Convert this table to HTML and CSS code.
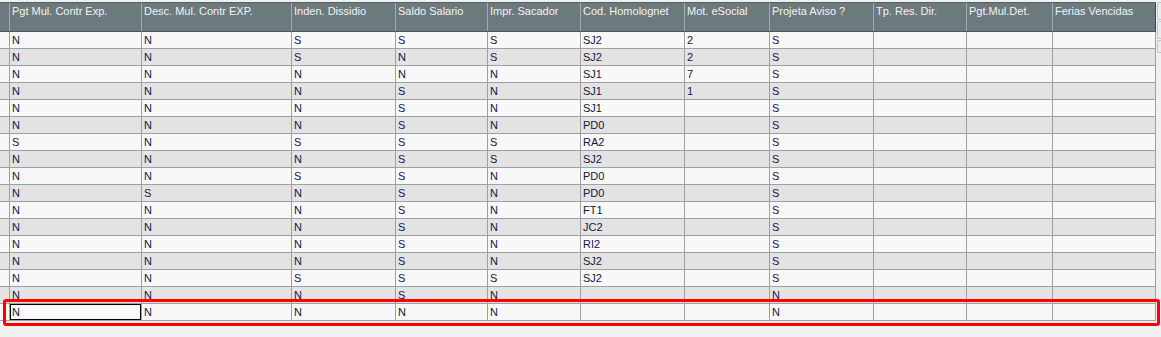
FILE: index.html
```html
<!DOCTYPE html>
<html lang="pt">
<head>
<meta charset="utf-8">
<title>Grade</title>
<link rel="stylesheet" href="styles.css">
</head>
<body>
<div class="frame">
  <div class="grid">
    <div class="row head">
      <div class="c"></div>
      <div class="c">Pgt Mul. Contr Exp.</div>
      <div class="c">Desc. Mul. Contr EXP.</div>
      <div class="c">Inden. Dissidio</div>
      <div class="c">Saldo Salario</div>
      <div class="c">Impr. Sacador</div>
      <div class="c">Cod. Homolognet</div>
      <div class="c">Mot. eSocial</div>
      <div class="c">Projeta Aviso ?</div>
      <div class="c">Tp. Res. Dir.</div>
      <div class="c">Pgt.Mul.Det.</div>
      <div class="c">Ferias Vencidas</div>
    </div>
    <div class="row odd"><div class="c"></div><div class="c">N</div><div class="c">N</div><div class="c">S</div><div class="c">S</div><div class="c">S</div><div class="c">SJ2</div><div class="c">2</div><div class="c">S</div><div class="c"></div><div class="c"></div><div class="c"></div></div>
    <div class="row even"><div class="c"></div><div class="c">N</div><div class="c">N</div><div class="c">S</div><div class="c">N</div><div class="c">S</div><div class="c">SJ2</div><div class="c">2</div><div class="c">S</div><div class="c"></div><div class="c"></div><div class="c"></div></div>
    <div class="row odd"><div class="c"></div><div class="c">N</div><div class="c">N</div><div class="c">N</div><div class="c">N</div><div class="c">N</div><div class="c">SJ1</div><div class="c">7</div><div class="c">S</div><div class="c"></div><div class="c"></div><div class="c"></div></div>
    <div class="row even"><div class="c"></div><div class="c">N</div><div class="c">N</div><div class="c">N</div><div class="c">S</div><div class="c">N</div><div class="c">SJ1</div><div class="c">1</div><div class="c">S</div><div class="c"></div><div class="c"></div><div class="c"></div></div>
    <div class="row odd"><div class="c"></div><div class="c">N</div><div class="c">N</div><div class="c">N</div><div class="c">S</div><div class="c">N</div><div class="c">SJ1</div><div class="c"></div><div class="c">S</div><div class="c"></div><div class="c"></div><div class="c"></div></div>
    <div class="row even"><div class="c"></div><div class="c">N</div><div class="c">N</div><div class="c">N</div><div class="c">S</div><div class="c">N</div><div class="c">PD0</div><div class="c"></div><div class="c">S</div><div class="c"></div><div class="c"></div><div class="c"></div></div>
    <div class="row odd"><div class="c"></div><div class="c">S</div><div class="c">N</div><div class="c">S</div><div class="c">S</div><div class="c">S</div><div class="c">RA2</div><div class="c"></div><div class="c">S</div><div class="c"></div><div class="c"></div><div class="c"></div></div>
    <div class="row even"><div class="c"></div><div class="c">N</div><div class="c">N</div><div class="c">N</div><div class="c">S</div><div class="c">S</div><div class="c">SJ2</div><div class="c"></div><div class="c">S</div><div class="c"></div><div class="c"></div><div class="c"></div></div>
    <div class="row odd"><div class="c"></div><div class="c">N</div><div class="c">N</div><div class="c">S</div><div class="c">S</div><div class="c">N</div><div class="c">PD0</div><div class="c"></div><div class="c">S</div><div class="c"></div><div class="c"></div><div class="c"></div></div>
    <div class="row even"><div class="c"></div><div class="c">N</div><div class="c">S</div><div class="c">N</div><div class="c">S</div><div class="c">N</div><div class="c">PD0</div><div class="c"></div><div class="c">S</div><div class="c"></div><div class="c"></div><div class="c"></div></div>
    <div class="row odd"><div class="c"></div><div class="c">N</div><div class="c">N</div><div class="c">N</div><div class="c">S</div><div class="c">N</div><div class="c">FT1</div><div class="c"></div><div class="c">S</div><div class="c"></div><div class="c"></div><div class="c"></div></div>
    <div class="row even"><div class="c"></div><div class="c">N</div><div class="c">N</div><div class="c">N</div><div class="c">S</div><div class="c">N</div><div class="c">JC2</div><div class="c"></div><div class="c">S</div><div class="c"></div><div class="c"></div><div class="c"></div></div>
    <div class="row odd"><div class="c"></div><div class="c">N</div><div class="c">N</div><div class="c">N</div><div class="c">S</div><div class="c">N</div><div class="c">RI2</div><div class="c"></div><div class="c">S</div><div class="c"></div><div class="c"></div><div class="c"></div></div>
    <div class="row even"><div class="c"></div><div class="c">N</div><div class="c">N</div><div class="c">N</div><div class="c">S</div><div class="c">N</div><div class="c">SJ2</div><div class="c"></div><div class="c">S</div><div class="c"></div><div class="c"></div><div class="c"></div></div>
    <div class="row odd"><div class="c"></div><div class="c">N</div><div class="c">N</div><div class="c">S</div><div class="c">S</div><div class="c">S</div><div class="c">SJ2</div><div class="c"></div><div class="c">S</div><div class="c"></div><div class="c"></div><div class="c"></div></div>
    <div class="row even"><div class="c"></div><div class="c">N</div><div class="c">N</div><div class="c">N</div><div class="c">S</div><div class="c">N</div><div class="c"></div><div class="c"></div><div class="c">N</div><div class="c"></div><div class="c"></div><div class="c"></div></div>
    <div class="row odd"><div class="c"></div><div class="c focus">N</div><div class="c">N</div><div class="c">N</div><div class="c">N</div><div class="c">N</div><div class="c"></div><div class="c"></div><div class="c">N</div><div class="c"></div><div class="c"></div><div class="c"></div></div>
  </div>
  <div class="vscroll">
    <div class="btn"></div>
    <div class="btn"></div>
    <div class="btn"></div>
  </div>
  <div class="mark"></div>
</div>
</body>
</html>
```
FILE: styles.css
```css
html, body {
  margin: 0;
  padding: 0;
  background: #f0f0f0;
}
body {
  width: 1161px;
  height: 337px;
  overflow: hidden;
  font-family: "Liberation Sans", Arial, sans-serif;
  font-size: 11px;
}
.frame {
  position: relative;
  display: flex;
  align-items: flex-start;
  padding-top: 2px;
  height: 335px;
}
.grid {
  width: 1156px;
  flex: none;
}
.row {
  display: grid;
  grid-template-columns: 10px 132px 150px 104px 92px 93px 104px 85px 104px 93px 86px 103px;
  box-sizing: border-box;
  height: 17px;
  border-bottom: 1px solid #a0a0a0;
}
.c {
  box-sizing: border-box;
  border-right: 1px solid #a0a0a0;
  padding: 2px 0 0 2px;
  line-height: 13px;
  color: #15154a;
  white-space: nowrap;
  overflow: hidden;
}
.odd { background: #f8f8f8; }
.even { background: #e3e3e3; }
.head {
  height: 30px;
  background: #6c7a7e;
  border-top: 1px solid #56625f;
  border-bottom: 1px solid #4b5659;
}
.head .c {
  color: #f2f4f4;
  padding-top: 2px;
  border-right-color: #a3adb0;
}
.head .c:last-child {
  border-right-color: #3f494c;
}
.focus {
  box-shadow: inset 0 0 0 1px #000;
}
.vscroll {
  flex: none;
  width: 5px;
  margin-left: 1px;
  display: flex;
  flex-direction: column;
  gap: 1px;
}
.btn {
  height: 16px;
  background: #ececec;
  border: 1px solid #c4c4c4;
  border-right: none;
  border-radius: 2px 0 0 2px;
}
.btn:last-child {
  height: 11px;
}
.mark {
  position: absolute;
  left: 3px;
  top: 299px;
  width: 1157px;
  height: 27px;
  box-sizing: border-box;
  border: 3px solid #ff0000;
  border-radius: 3px;
}
```
